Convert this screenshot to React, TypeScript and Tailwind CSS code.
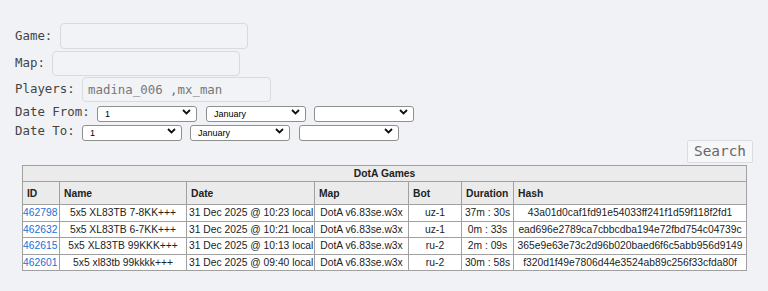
import React from "react";

type Game = {
  id: string;
  name: string;
  date: string;
  map: string;
  bot: string;
  duration: string;
  hash: string;
};

const games: Game[] = [
  {
    id: "462798",
    name: "5x5 XL83TB 7-8KK+++",
    date: "31 Dec 2025 @ 10:23 local",
    map: "DotA v6.83se.w3x",
    bot: "uz-1",
    duration: "37m : 30s",
    hash: "43a01d0caf1fd91e54033ff241f1d59f118f2fd1",
  },
  {
    id: "462632",
    name: "5x5 XL83TB 6-7KK+++",
    date: "31 Dec 2025 @ 10:21 local",
    map: "DotA v6.83se.w3x",
    bot: "uz-1",
    duration: "0m : 33s",
    hash: "ead696e2789ca7cbbcdba194e72fbd754c04739c",
  },
  {
    id: "462615",
    name: "5x5 XL83TB 99KKK+++",
    date: "31 Dec 2025 @ 10:13 local",
    map: "DotA v6.83se.w3x",
    bot: "ru-2",
    duration: "2m : 09s",
    hash: "365e9e63e73c2d96b020baed6f6c5abb956d9149",
  },
  {
    id: "462601",
    name: "5x5 xl83tb 99kkkk+++",
    date: "31 Dec 2025 @ 09:40 local",
    map: "DotA v6.83se.w3x",
    bot: "ru-2",
    duration: "30m : 58s",
    hash: "f320d1f49e7806d44e3524ab89c256f33cfda80f",
  },
];

const Chevron = () => (
  <svg width="9" height="6" viewBox="0 0 9 6" className="absolute right-[6px] top-[5px]">
    <path d="M1 1 L4.5 4.5 L8 1" fill="none" stroke="#111" strokeWidth="1.8" />
  </svg>
);

const Select = ({ value, className = "" }: { value: string; className?: string }) => (
  <div className={"relative w-[100px] h-[16px] " + className}>
    <select
      defaultValue={value}
      className="appearance-none w-full h-full bg-white border border-[#8f8f8f] rounded-[3px] pl-[7px] text-[9px] leading-[14px] text-black font-['Liberation_Sans',Arial,sans-serif]"
    >
      <option value={value}>{value}</option>
    </select>
    <Chevron />
  </div>
);

const th = "border border-[#a0a0a0] bg-[#ebebeb] text-left font-bold px-[4px]";
const td = "border border-[#a0a0a0] bg-white";

const App = () => {
  return (
    <div className="min-h-[291px] bg-[#f1f2f6] pt-[23px] font-['DejaVu_Sans_Mono',monospace] text-[12.4px] text-[#444]">
      <form onSubmit={(e) => e.preventDefault()}>
        <div className="flex items-center h-[26px] pl-[15px]">
          <label className="w-[45px]">Game:</label>
          <input className="w-[188px] h-[26px] border border-[#d8dadf] rounded-[4px] bg-[#f2f3f7]" />
        </div>
        <div className="flex items-center h-[25px] mt-[2px] pl-[15px]">
          <label className="w-[37px]">Map:</label>
          <input className="w-[188px] h-[25px] border border-[#d8dadf] rounded-[4px] bg-[#f2f3f7]" />
        </div>
        <div className="flex items-center h-[25px] mt-[1px] pl-[15px]">
          <label className="w-[67px]">Players:</label>
          <input
            defaultValue="madina_006 ,mx_man"
            className="w-[189px] h-[25px] border border-[#d8dadf] rounded-[4px] bg-[#f2f3f7] pl-[5px] text-[#777]"
          />
        </div>
        <div className="flex items-center h-[16px] mt-[2px] pl-[15px]">
          <label className="w-[82px]">Date From:</label>
          <Select value="1" />
          <Select value="January" className="ml-[9px]" />
          <Select value="" className="ml-[8px]" />
        </div>
        <div className="flex items-center h-[16px] mt-[3px] pl-[15px]">
          <label className="w-[67px]">Date To:</label>
          <Select value="1" />
          <Select value="January" className="ml-[8px]" />
          <Select value="" className="ml-[9px]" />
        </div>
        <div className="flex justify-end mt-[1px] pr-[15px]">
          <button className="w-[66px] h-[23px] border border-[#dcdde1] rounded-[2px] bg-[#f6f7f9] text-[14.4px] text-[#666]">
            Search
          </button>
        </div>
      </form>

      <table className="mx-[22px] mt-[2px] w-[724px] table-fixed border-collapse border border-[#888] font-['Liberation_Sans',Arial,sans-serif] text-[10.3px] text-[#222]">
        <colgroup>
          <col className="w-[37px]" />
          <col className="w-[127px]" />
          <col className="w-[128px]" />
          <col className="w-[94px]" />
          <col className="w-[53px]" />
          <col className="w-[52px]" />
          <col className="w-[233px]" />
        </colgroup>
        <thead>
          <tr className="h-[15px]">
            <th colSpan={7} className="border border-[#a0a0a0] bg-[#ebebeb] font-bold text-center">
              DotA Games
            </th>
          </tr>
          <tr className="h-[23px]">
            <th className={th}>ID</th>
            <th className={th}>Name</th>
            <th className={th}>Date</th>
            <th className={th}>Map</th>
            <th className={th}>Bot</th>
            <th className={th}>Duration</th>
            <th className={th}>Hash</th>
          </tr>
        </thead>
        <tbody>
          {games.map((g) => (
            <tr key={g.id} className="h-[16.25px]">
              <td className={td + " px-0 text-left"}>
                <a href="#" className="text-[#1c6fd4]">{g.id}</a>
              </td>
              <td className={td + " text-center whitespace-nowrap"}>{g.name}</td>
              <td className={td + " pl-[2px] whitespace-nowrap"}>{g.date}</td>
              <td className={td + " text-center whitespace-nowrap"}>{g.map}</td>
              <td className={td + " text-center"}>{g.bot}</td>
              <td className={td + " text-center whitespace-nowrap"}>{g.duration}</td>
              <td className={td + " text-center whitespace-nowrap"}>{g.hash}</td>
            </tr>
          ))}
        </tbody>
      </table>
    </div>
  );
};

export default App;
